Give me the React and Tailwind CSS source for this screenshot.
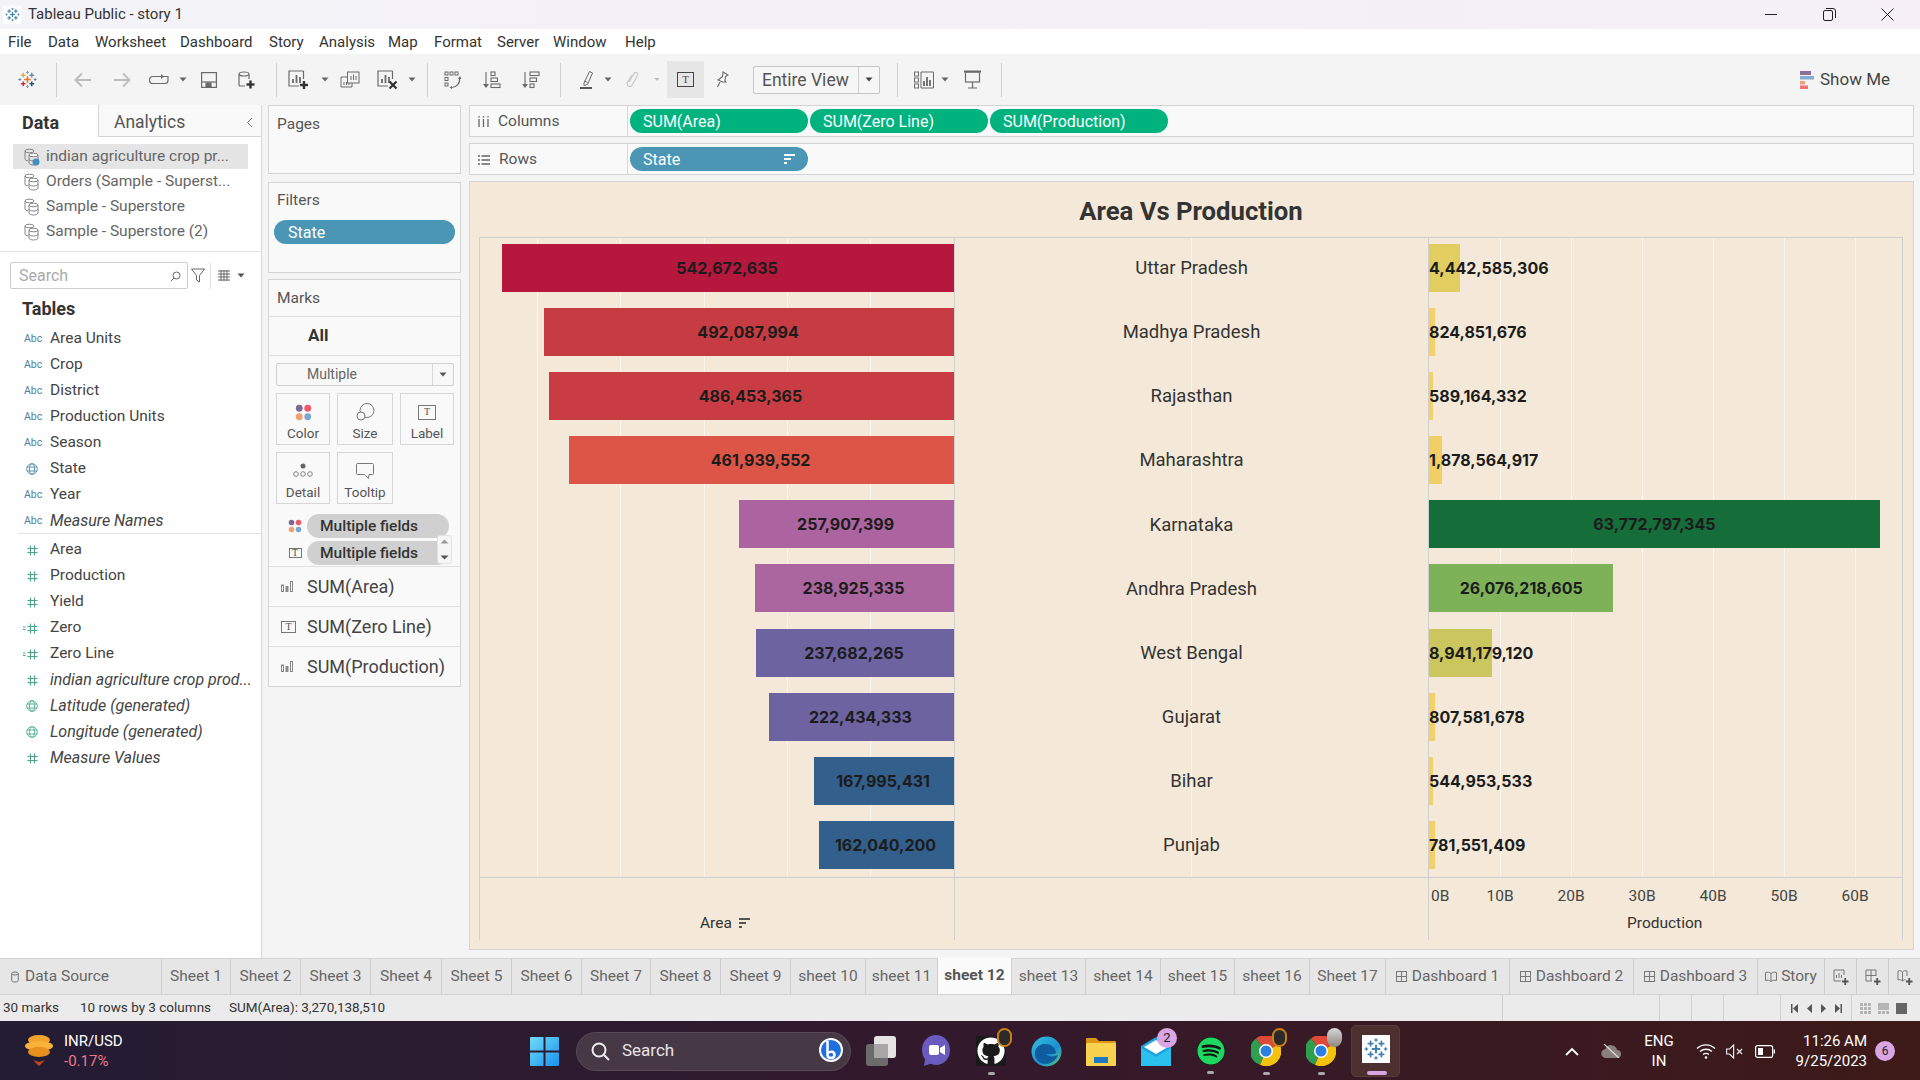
import React from 'react';
import { FaGithub, FaSpotify } from 'react-icons/fa';

const G = '#6a6a6a';

const areaRows = [
  ['Uttar Pradesh', 542672635, '#b5173d', 4442585306, '#e1cd60'],
  ['Madhya Pradesh', 492087994, '#c73b42', 824851676, '#f3d168'],
  ['Rajasthan', 486453365, '#c93c43', 589164332, '#f3d168'],
  ['Maharashtra', 461939552, '#dd5546', 1878564917, '#f1cf64'],
  ['Karnataka', 257907399, '#ab649f', 63772797345, '#156d3a'],
  ['Andhra Pradesh', 238925335, '#ab659f', 26076218605, '#7db259'],
  ['West Bengal', 237682265, '#6d63a0', 8941179120, '#cbc75e'],
  ['Gujarat', 222434333, '#6d63a0', 807581678, '#f3d168'],
  ['Bihar', 167995431, '#325f8c', 544953533, '#f3d168'],
  ['Punjab', 162040200, '#325f8c', 781551409, '#f3d168'],
];

const fields = [
  ['abc', 'Area Units'], ['abc', 'Crop'], ['abc', 'District'], ['abc', 'Production Units'], ['abc', 'Season'],
  ['globe', 'State'], ['abc', 'Year'], ['abc', 'Measure Names', true],
];
const measures = [
  ['hash', 'Area'], ['hash', 'Production'], ['hash', 'Yield'], ['calc', 'Zero'], ['calc', 'Zero Line'],
  ['hash', 'indian agriculture crop prod...', true], ['globeg', 'Latitude (generated)', true],
  ['globeg', 'Longitude (generated)', true], ['hash', 'Measure Values', true],
];

const iconPad = { abc: 'pl-[24px]', hash: 'pl-[27px]', calc: 'pl-[23px]', globe: 'pl-[26px]', globeg: 'pl-[26px]' };

const tabs = [
  ['Sheet 1', 'w-[69px]'], ['Sheet 2', 'w-[70px]'], ['Sheet 3', 'w-[70px]'], ['Sheet 4', 'w-[71px]'],
  ['Sheet 5', 'w-[70px]'], ['Sheet 6', 'w-[70px]'], ['Sheet 7', 'w-[69px]'], ['Sheet 8', 'w-[70px]'],
  ['Sheet 9', 'w-[70px]'], ['sheet 10', 'w-[75px]'], ['sheet 11', 'w-[72px]'], ['sheet 12', 'w-[74px]'],
  ['sheet 13', 'w-[74px]'], ['sheet 14', 'w-[75px]'], ['sheet 15', 'w-[74px]'], ['sheet 16', 'w-[75px]'],
  ['Sheet 17', 'w-[76px]'],
];

const menus = [
  ['File', 'w-[40px]'], ['Data', 'w-[47px]'], ['Worksheet', 'w-[85px]'], ['Dashboard', 'w-[89px]'],
  ['Story', 'w-[50px]'], ['Analysis', 'w-[69px]'], ['Map', 'w-[46px]'], ['Format', 'w-[63px]'],
  ['Server', 'w-[56px]'], ['Window', 'w-[72px]'], ['Help', 'w-[40px]'],
];

const TableauLogo = ({ size = 20, mono }) => {
  const c = (col) => (mono ? '#3f7fb0' : col);
  const cross = (x, y, r, col, w = 1.4) => (
    <g stroke={c(col)} strokeWidth={w}>
      <line x1={x - r} y1={y} x2={x + r} y2={y} />
      <line x1={x} y1={y - r} x2={x} y2={y + r} />
    </g>
  );
  return (
    <svg width={size} height={size} viewBox="0 0 20 20">
      {cross(10, 10, 3.5, '#e8762c', 1.6)}
      {cross(5.5, 5.5, 2.5, '#e8a33d')}
      {cross(14.5, 5.5, 2.5, '#5b879b')}
      {cross(5.5, 14.5, 2.5, '#c72035')}
      {cross(14.5, 14.5, 2.5, '#1f447a')}
      {cross(10, 2.5, 1.5, '#7099a6', 1)}
      {cross(10, 17.5, 1.5, '#7099a6', 1)}
      {cross(2, 10, 1.5, '#59879b', 1)}
      {cross(18, 10, 1.5, '#59879b', 1)}
    </svg>
  );
};

const Drop = ({ color = '#666' }) => (
  <svg width="8" height="5" viewBox="0 0 8 5"><path d="M0.5 0.5h7L4 4.5z" fill={color} /></svg>
);

const Sep = ({ className }) => <div className={`w-px h-[34px] bg-[#cfcfcf] shrink-0 ${className || ''}`} />;

const Cell = ({ className, children }) => (
  <div className={`flex items-center justify-center shrink-0 ${className}`}>{children}</div>
);

const Plus = ({ x, y }) => (
  <g stroke="#333" strokeWidth="2.4"><line x1={x - 4} y1={y} x2={x + 4} y2={y} /><line x1={x} y1={y - 4} x2={x} y2={y + 4} /></g>
);

const SheetIcon = ({ badge }) => (
  <svg width="22" height="20" viewBox="0 0 22 20" fill="none">
    <path d="M15.5 1H1v15h10" stroke={G} strokeWidth="1.2" />
    <line x1="15.5" y1="1" x2="15.5" y2="9" stroke={G} strokeWidth="1.2" />
    <path d="M5 13V9M8.500 13V5M12 13V7" stroke={G} strokeWidth="1.8" />
    {badge === 'plus' && <Plus x={16} y={15} />}
    {badge === 'x' && (
      <g stroke="#333" strokeWidth="2.2"><line x1="12.500" y1="11.500" x2="19.500" y2="18.500" /><line x1="19.500" y1="11.500" x2="12.500" y2="18.500" /></g>
    )}
  </svg>
);

const Toolbar = () => (
  <div className="h-[51px] bg-[#f4f4f4] flex items-center pl-[8px] pr-[30px] shrink-0">
    <Cell className="w-[38px]"><TableauLogo size={19} /></Cell>
    <Sep className="ml-[10px]" />
    <Cell className="w-[42px] ml-[5px]">
      <svg width="18" height="16" viewBox="0 0 18 16" fill="none" stroke="#bdbdbd" strokeWidth="2"><path d="M17 8H2M8 1.500L1.500 8 8 14.500" /></svg>
    </Cell>
    <Cell className="w-[36px]">
      <svg width="18" height="16" viewBox="0 0 18 16" fill="none" stroke="#bdbdbd" strokeWidth="2"><path d="M1 8h15M10 1.500L16.500 8 10 14.500" /></svg>
    </Cell>
    <Cell className="w-[38px]">
      <svg width="20" height="14" viewBox="0 0 20 14" fill="none" stroke={G} strokeWidth="1.2"><path d="M12 3.500H4a3.300 3.300 0 0 0 0 7h12a3 3 0 0 0 3-3V3.500H14" /><path d="M12 1l3 2.500L12 6z" fill={G} stroke="none" /></svg>
    </Cell>
    <Cell className="w-[10px]"><Drop /></Cell>
    <Cell className="w-[42px]">
      <svg width="16" height="16" viewBox="0 0 16 16" fill="none" stroke={G} strokeWidth="1.2"><rect x="0.600" y="0.600" width="14.800" height="14.800" /><line x1="1" y1="10" x2="15" y2="10" /><rect x="5" y="11" width="5" height="4" fill={G} /></svg>
    </Cell>
    <Cell className="w-[34px]">
      <svg width="18" height="18" viewBox="0 0 18 18" fill="none" stroke={G} strokeWidth="1.2"><path d="M1 3.500V14a1 1 0 0 0 1 1h5M11 3.500V8" /><ellipse cx="6" cy="3" rx="5" ry="2" /><Plus x={12.500} y={13.500} /></svg>
    </Cell>
    <Sep className="ml-[12px]" />
    <Cell className="w-[44px]"><SheetIcon badge="plus" /></Cell>
    <Cell className="w-[8px]"><Drop /></Cell>
    <Cell className="w-[42px]">
      <svg width="20" height="18" viewBox="0 0 20 18" fill="none" stroke={G} strokeWidth="1"><rect x="7.500" y="1" width="11.500" height="11" fill="#f4f4f4" /><path d="M11 9V5M13.500 9V3.500M16 9V5" /><path d="M7 6H1v10h11v-4" /><path d="M4 14v-3M6.500 14v-3M9 14v-2" /></svg>
    </Cell>
    <Cell className="w-[34px]"><SheetIcon badge="x" /></Cell>
    <Cell className="w-[14px]"><Drop /></Cell>
    <Sep className="ml-[8px]" />
    <Cell className="w-[50px]">
      <svg width="18" height="18" viewBox="0 0 18 18" fill="none" stroke={G} strokeWidth="1"><rect x="1" y="1" width="3" height="3" /><rect x="6" y="1" width="3" height="3" /><rect x="11" y="1" width="3" height="3" /><rect x="1" y="6.500" width="3" height="3" /><rect x="1" y="12" width="3" height="3" /><path d="M15.500 7a8 8 0 0 1-8 9.500" strokeWidth="1.200" /><path d="M14 8l2-3 1.500 3zM8 15l-2.500 1.500L8 18z" fill={G} stroke="none" /></svg>
    </Cell>
    <Cell className="w-[28px]">
      <svg width="18" height="18" viewBox="0 0 18 18" fill="none" stroke={G} strokeWidth="1.1"><path d="M3 1v14" /><path d="M0 13l3 4 3-4z" fill={G} stroke="none" /><rect x="8" y="1" width="4" height="3.500" /><rect x="8" y="7" width="6.500" height="3.500" /><rect x="8" y="13" width="9" height="3.500" /></svg>
    </Cell>
    <Cell className="w-[50px]">
      <svg width="18" height="18" viewBox="0 0 18 18" fill="none" stroke={G} strokeWidth="1.1"><path d="M3 1v14" /><path d="M0 13l3 4 3-4z" fill={G} stroke="none" /><rect x="8" y="1" width="9" height="3.500" /><rect x="8" y="7" width="6.500" height="3.500" /><rect x="8" y="13" width="4" height="3.500" /></svg>
    </Cell>
    <Sep className="ml-[4px]" />
    <Cell className="w-[34px] ml-[9px]">
      <svg width="14" height="19" viewBox="0 0 14 19" fill="none" stroke={G} strokeWidth="1"><path d="M4 13L9.500 1.500l3 1.500-5 11.500-3.500 1z" /><path d="M4.500 11l3 1.500" /><rect x="0" y="17" width="12" height="2" fill="#555" stroke="none" /></svg>
    </Cell>
    <Cell className="w-[8px]"><Drop /></Cell>
    <Cell className="w-[42px]">
      <svg width="14" height="18" viewBox="0 0 14 18" fill="none" stroke="#c9c9c9" strokeWidth="1.2"><path d="M3 11l5-8.500a2 2 0 0 1 3.500 2L5.500 15a3 3 0 0 1-4.500-3L6 4" /></svg>
    </Cell>
    <Cell className="w-[6px]"><Drop color="#bbb" /></Cell>
    <Cell className="w-[37px] h-[37px] bg-[#e6e6e6] ml-[7px]">
      <div className="w-[17px] h-[15px] border border-[#444] flex items-center justify-center text-[11px] leading-none text-[#444] font-['Liberation_Serif',serif]">T</div>
    </Cell>
    <Cell className="w-[36px]">
      <svg width="13" height="17" viewBox="0 0 13 17" fill="none" stroke={G} strokeWidth="1.1"><path d="M7 1l5 3-2.500 1.500L9 9.500l1 1.500-3.500 0L2 9l1.500-1L6.500 5.500z" /><path d="M4 11l-2.500 5" /></svg>
    </Cell>
    <div className="w-[127px] h-[28px] ml-[13px] border border-[#c6c6c6] rounded-[2px] bg-[#f6f6f6] flex items-center shrink-0">
      <div className="w-[104px] pl-[8px] pt-px text-[17.500px] text-[#555] whitespace-nowrap">Entire View</div>
      <div className="flex-1 h-full border-l border-[#d0d0d0] flex items-center justify-center"><Drop color="#444" /></div>
    </div>
    <Sep className="ml-[17px]" />
    <Cell className="w-[34px] ml-[9px]">
      <svg width="20" height="18" viewBox="0 0 20 18" fill="none" stroke={G} strokeWidth="1"><rect x="0.500" y="1" width="4" height="4" /><rect x="0.500" y="7" width="4" height="4" /><rect x="0.500" y="13" width="4" height="4" /><path d="M7 1h12.500v16H7z" /><path d="M10 15v-5M13 15V6M16 15V9" strokeWidth="1.800" /></svg>
    </Cell>
    <Cell className="w-[8px]"><Drop /></Cell>
    <Cell className="w-[47px]">
      <svg width="17" height="19" viewBox="0 0 17 19" fill="none" stroke={G} strokeWidth="1.2"><path d="M0 1.500h17" strokeWidth="2" /><rect x="1.500" y="2" width="14" height="10" /><path d="M8.500 12v6M4 18h9" /></svg>
    </Cell>
    <Sep className="ml-[5px]" />
    <div className="ml-auto flex items-center gap-[6px] text-[17px] text-[#444]">
      <svg width="14" height="18" viewBox="0 0 14 18"><rect x="0" y="0" width="11" height="4" fill="#8a6f97" /><rect x="0" y="5" width="14" height="3.500" fill="#86a9cf" /><rect x="0" y="10" width="5" height="3.500" fill="#eca17a" /><rect x="0" y="14.500" width="8" height="3.500" fill="#f0737a" /></svg>
      Show Me
    </div>
  </div>
);

const DsIcon = ({ active }) => (
  <svg className="shrink-0" width="16" height="18" viewBox="0 0 16 18" fill="none" stroke="#777" strokeWidth="0.900">
    <ellipse cx="5.500" cy="3" rx="4.500" ry="1.800" />
    <path d="M1 3v8c0 1 1.500 1.800 3 1.800" />
    <ellipse cx="9.500" cy="7" rx="4.500" ry="1.800" fill="#fff" />
    <path d="M5 7v8c0 1 2 2 4.500 2s4.500-1 4.500-2V7M5 11c0 1 2 2 4.500 2s4.500-1 4.500-2" />
    {active && <circle cx="12" cy="14" r="3.500" fill="#3f8fbf" stroke="none" />}
  </svg>
);

const FieldIcon = ({ type }) => {
  if (type === 'abc') return <span className="text-[10.5px] text-[#4f7f9c] leading-none">Abc</span>;
  if (type === 'globe' || type === 'globeg') {
    const col = type === 'globe' ? '#4f8fa8' : '#4cab90';
    return (
      <svg className="shrink-0" width="12" height="12" viewBox="0 0 12 12" fill="none" stroke={col} strokeWidth="0.900">
        <circle cx="6" cy="6" r="5.300" /><ellipse cx="6" cy="6" rx="2.500" ry="5.300" /><path d="M1 4h10M1 8h10" />
      </svg>
    );
  }
  return (
    <svg className="shrink-0" width={type === 'calc' ? 15 : 11} height="11" viewBox={type === 'calc' ? '-4 0 15 11' : '0 0 11 11'} fill="none" stroke="#4aa588" strokeWidth="1">
      <path d="M3.500 0.500v10M7.500 0.500v10M0.500 3.500h10M0.500 7.500h10" />
      {type === 'calc' && <path d="M-4 4h2.500M-4 6.500h2.500" />}
    </svg>
  );
};

const FieldRow = ({ icon, label, italic }) => (
  <div className="h-[26px] flex items-center">
    <div className={`w-[50px] flex items-center shrink-0 ${iconPad[icon]}`}>
      <FieldIcon type={icon} />
    </div>
    <span className={`text-[#444] whitespace-nowrap ${italic ? 'italic text-[16px]' : 'text-[15.500px]'}`}>{label}</span>
  </div>
);

const DataPanel = () => (
  <div className="w-[262px] shrink-0 bg-white border-r border-[#d8d8d8] flex flex-col">
    <div className="h-[32px] flex items-stretch shrink-0">
      <div className="w-[98px] pl-[22px] pt-[2px] flex items-center text-[18px] font-bold text-[#333]">Data</div>
      <div className="flex-1 bg-[#f9f9f9] border-l border-b border-[#d4d4d4] flex items-center pl-[15px] pt-[3px] text-[17.500px] text-[#555]">
        Analytics
        <svg className="ml-auto mr-[8px]" width="7" height="11" viewBox="0 0 7 11" fill="none" stroke="#777" strokeWidth="1"><path d="M6 1L1.500 5.500 6 10" /></svg>
      </div>
    </div>
    <div className="pt-[7px] pl-[13px] h-[115px] border-b border-[#e2e2e2] shrink-0">
      {['indian agriculture crop pr...', 'Orders (Sample - Superst...', 'Sample - Superstore', 'Sample - Superstore (2)'].map((d, i) => (
        <div key={d} className={`w-[235px] h-[25px] flex items-center pl-[11px] gap-[6px] text-[15.500px] text-[#666] whitespace-nowrap ${i === 0 ? 'bg-[#e5e5e5]' : ''}`}>
          <DsIcon active={i === 0} />
          <span>{d}</span>
        </div>
      ))}
    </div>
    <div className="flex items-center pl-[10px] mt-[10px] shrink-0">
      <div className="w-[178px] h-[27px] border border-[#cccccc] rounded-[2px] flex items-center px-[8px] pt-[1px] text-[16px] text-[#aaa]">
        Search
        <svg className="ml-auto -mr-[2px]" width="11" height="11" viewBox="0 0 11 11" fill="none" stroke="#666" strokeWidth="1"><circle cx="6.500" cy="4.500" r="3.500" /><path d="M4 7l-3 3" /></svg>
      </div>
      <svg className="ml-[3px]" width="14" height="15" viewBox="0 0 14 15" fill="none" stroke="#666" strokeWidth="1"><path d="M0.500 1h13L8.500 7.500V14l-3-2V7.500z" /></svg>
      <div className="w-px h-[26px] bg-[#dcdcdc] ml-[5px]" />
      <svg className="ml-[7px]" width="12" height="11" viewBox="0 0 12 11" fill="none" stroke="#666" strokeWidth="1"><path d="M0 1h12M0 4h12M0 7h12M0 10h12M3 0v11M6 0v11M9 0v11" /></svg>
      <div className="ml-[7px]"><Drop color="#555" /></div>
    </div>
    <div className="pl-[22px] mt-[9px] h-[22px] leading-[22px] text-[18px] font-bold text-[#333] shrink-0">Tables</div>
    <div className="mt-[6px]">
      {fields.map(([icon, label, italic]) => <FieldRow key={label} icon={icon} label={label} italic={italic} />)}
    </div>
    <div className="ml-[18px] border-t border-[#e2e2e2] mt-[-1px]" />
    <div className="mt-[3px]">
      {measures.map(([icon, label, italic]) => <FieldRow key={label} icon={icon} label={label} italic={italic} />)}
    </div>
  </div>
);

const Card = ({ className, children }) => (
  <div className={`w-[193px] bg-[#f9f9f9] border border-[#d4d4d4] shrink-0 ${className || ''}`}>{children}</div>
);

const MarkBtn = ({ label, className, children }) => (
  <div className={`h-[52px] border border-[#d6d6d6] flex flex-col items-center pt-[6px] text-[13.500px] text-[#555] ${className}`}>
    <div className="h-[24px] flex items-center">{children}</div>
    <div className="leading-[18px]">{label}</div>
  </div>
);

const FourDots = ({ s = 20 }) => (
  <svg width={s} height={s} viewBox="0 0 20 20">
    <circle cx="5" cy="5" r="4" fill="#7d6a92" /><circle cx="15" cy="5" r="4" fill="#ef5a6b" />
    <circle cx="5" cy="15" r="4" fill="#f0a070" /><circle cx="15" cy="15" r="4" fill="#7ea6d0" />
  </svg>
);

const TBox = ({ w = 16 }) => (
  <div style={{ width: w, height: w - 3 }} className="border border-[#777] flex items-center justify-center text-[10px] leading-none text-[#555] font-['Liberation_Serif',serif]">T</div>
);

const BarsGlyph = () => (
  <svg width="12" height="11" viewBox="0 0 12 11" fill="none" stroke="#888" strokeWidth="1"><rect x="0.500" y="4" width="2" height="6.500" /><rect x="5" y="5.500" width="2" height="5" fill="#888" /><rect x="9.500" y="0.500" width="2" height="10" /></svg>
);

const ShelfPanel = () => (
  <div className="w-[206px] shrink-0 bg-[#f4f4f4] pl-[6px] flex flex-col">
    <Card className="h-[69px] pl-[8px] pt-[7px] text-[15.500px] text-[#555]">Pages</Card>
    <Card className="h-[91px] mt-[8px] px-[5px]">
      <div className="pl-[3px] pt-[6px] text-[15.500px] text-[#555] leading-[22px]">Filters</div>
      <div className="mt-[9px] h-[24px] rounded-full bg-[#4b96b4] text-white text-[16px] pl-[14px] pt-px flex items-center">State</div>
    </Card>
    <Card className="mt-[6px] h-[408px] flex flex-col">
      <div className="h-[37px] pl-[8px] pt-px flex items-center text-[15.500px] text-[#555] border-b border-[#e0e0e0] shrink-0">Marks</div>
      <div className="h-[39px] pl-[39px] flex items-center text-[17px] font-bold text-[#333] border-b border-[#e0e0e0] shrink-0">All</div>
      <div className="mx-[7px] mt-[7px] w-[178px] h-[23px] border border-[#d0d0d0] rounded-[2px] bg-[#f8f8f8] flex items-center shrink-0">
        <div className="w-[155px] pl-[30px] text-[14px] text-[#666]">Multiple</div>
        <div className="flex-1 h-full border-l border-[#d8d8d8] flex items-center justify-center"><Drop color="#555" /></div>
      </div>
      <div className="mx-[7px] mt-[7px] grid grid-cols-[54px_56px_54px] gap-x-[7px] gap-y-[7px] shrink-0">
        <MarkBtn label="Color"><FourDots s={17} /></MarkBtn>
        <MarkBtn label="Size">
          <svg width="19" height="18" viewBox="0 0 19 18" fill="none" stroke="#777" strokeWidth="1"><circle cx="11" cy="7.500" r="7" /><circle cx="5" cy="13" r="4" fill="#f9f9f9" /></svg>
        </MarkBtn>
        <MarkBtn label="Label"><TBox w={18} /></MarkBtn>
        <MarkBtn label="Detail">
          <svg width="20" height="16" viewBox="0 0 20 16" fill="none" stroke="#777" strokeWidth="0.900"><circle cx="10" cy="3" r="2.500" fill="#666" stroke="none" /><circle cx="3" cy="11" r="2.300" /><circle cx="10" cy="11" r="2.300" /><circle cx="17" cy="11" r="2.300" /></svg>
        </MarkBtn>
        <MarkBtn label="Tooltip">
          <svg width="18" height="16" viewBox="0 0 18 16" fill="none" stroke="#777" strokeWidth="1"><path d="M1.500 0.500h15a1 1 0 0 1 1 1v9a1 1 0 0 1-1 1H13l-.5 4-4-4H1.500a1 1 0 0 1-1-1v-9a1 1 0 0 1 1-1z" /></svg>
        </MarkBtn>
      </div>
      <div className="relative mt-[10px] h-[52px] shrink-0">
        {[0, 1].map((i) => (
          <div key={i} className="h-[24px] mb-[3px] flex items-center pl-[18px]">
            <div className="w-[16px] flex justify-center">{i === 0 ? <FourDots s={14} /> : <TBox w={13} />}</div>
            <div className="ml-[4px] w-[142px] h-[24px] rounded-full bg-[#d0d0d0] pl-[13px] pt-[2px] flex items-center text-[15.500px] font-medium text-[#333] whitespace-nowrap">Multiple fields</div>
          </div>
        ))}
        <div className="absolute left-[168px] top-[21px] w-[15px] h-[29px] flex flex-col rounded-[3px] border border-[#e2e2e2] bg-[#f6f6f6] items-center justify-between py-[3px]">
          <svg width="9" height="5" viewBox="0 0 9 5"><path d="M0.500 4.500h8L4.500 0.500z" fill="#999" /></svg>
          <svg width="9" height="5" viewBox="0 0 9 5"><path d="M0.500 0.500h8L4.500 4.500z" fill="#555" /></svg>
        </div>
      </div>
      {[['bars', 'SUM(Area)'], ['t', 'SUM(Zero Line)'], ['bars', 'SUM(Production)']].map(([ic, label]) => (
        <div key={label} className="h-[40px] border-t border-[#e0e0e0] flex items-center pl-[12px] shrink-0">
          <div className="w-[26px]">{ic === 'bars' ? <BarsGlyph /> : <TBox w={15} />}</div>
          <span className="text-[18px] text-[#444] whitespace-nowrap">{label}</span>
        </div>
      ))}
    </Card>
  </div>
);

const ShelfRow = ({ icon, label, children }) => (
  <div className="h-[32px] bg-[#f9f9f9] border border-[#d4d4d4] flex items-center shrink-0">
    <div className="w-[158px] h-full border-r border-[#d8d8d8] flex items-center pl-[8px] pt-px gap-[9px] text-[15.500px] text-[#555]">
      {icon}{label}
    </div>
    <div className="flex gap-[2px] pl-[2px]">{children}</div>
  </div>
);

const SortGlyph = ({ color, className }) => (
  <svg className={className} width="11" height="11" viewBox="0 0 11 11" fill={color}>
    <rect x="0" y="0" width="11" height="2" /><rect x="0" y="4" width="7" height="2" /><rect x="0" y="8" width="3" height="2" />
  </svg>
);

const Pill = ({ color, label, sort }) => (
  <div className={`w-[178px] h-[24px] rounded-full ${color} text-white text-[16px] pl-[13px] pr-[13px] pt-px flex items-center`}>
    {label}
    {sort && <SortGlyph color="#fff" className="ml-auto" />}
  </div>
);

const fmt = (n) => n.toLocaleString('en-US');

const PX_PER_AREA = 452 / 542672635;
const PX_PER_PROD = 7.07 / 1e9;

const GridLines = ({ xs, from }) =>
  xs.map((x) => (
    <div key={x} className="absolute top-0 bottom-0 w-px bg-[#f9f5ed]" style={from === 'right' ? { right: x } : { left: x }} />
  ));

const Chart = () => (
  <div className="flex-1 min-h-0 bg-[#f4e9d8] border border-[#d4d4d4] pl-[9px] pr-[10px] flex flex-col">
    <div className="h-[55px] flex items-center justify-center text-[25.700px] font-bold text-[#333] shrink-0 pt-[4px]">Area Vs Production</div>
    <div className="h-[640px] flex border-t border-x border-[#cfcfcf] shrink-0">
      <div className="relative w-[475px] border-r border-[#cfcfcf] shrink-0 flex flex-col pt-[6px]">
        <GridLines xs={[83, 166, 249, 333, 416]} from="right" />
        {areaRows.map(([st, a, col]) => (
          <div key={st} className="h-[64.100px] shrink-0 flex justify-end relative">
            <div
              className="h-[48px] flex items-center justify-center pr-[2px] text-[16px] font-bold font-['Inter',sans-serif] text-[#1c1c1c]"
              style={{ width: a * PX_PER_AREA, backgroundColor: col }}
            >
              {fmt(a)}
            </div>
          </div>
        ))}
      </div>
      <div className="relative w-[474px] border-r border-[#cfcfcf] shrink-0 flex flex-col pt-[6px]">
        <GridLines xs={[236]} />
        {areaRows.map(([st]) => (
          <div key={st} className="h-[64.100px] shrink-0 relative">
            <div className="h-[48px] pt-[2px] flex items-center justify-center text-[18.500px] text-[#333]">{st}</div>
          </div>
        ))}
      </div>
      <div className="relative flex-1 flex flex-col pt-[6px]">
        <GridLines xs={[71, 142, 213, 284, 355, 426]} />
        {areaRows.map(([st, , , p, col]) => {
          const w = p * PX_PER_PROD;
          return (
            <div key={st} className="h-[64.100px] shrink-0 relative">
              <div className="relative h-[48px] text-[16px] font-bold font-['Inter',sans-serif] text-[#1c1c1c]" style={{ width: w, backgroundColor: col }}>
                <span className={`absolute top-1/2 -translate-y-1/2 whitespace-nowrap ${w > 150 ? 'left-1/2 -translate-x-1/2' : 'left-0'}`}>{fmt(p)}</span>
              </div>
            </div>
          );
        })}
      </div>
    </div>
    <div className="h-[63px] flex border-x border-t border-[#cfcfcf] shrink-0">
      <div className="relative w-[475px] border-r border-[#cfcfcf] shrink-0 text-[15.500px] text-[#333]">
        <div className="absolute left-[220px] top-[34px] flex items-center gap-[7px]">
          Area <SortGlyph color="#555" />
        </div>
      </div>
      <div className="w-[474px] border-r border-[#cfcfcf] shrink-0" />
      <div className="relative flex-1 text-[#444] text-[15.500px]">
        {['0B', '10B', '20B', '30B', '40B', '50B', '60B'].map((t, i) => (
          <span key={t} className={`absolute top-[7px] ${i === 0 ? '' : '-translate-x-1/2'}`} style={{ left: i === 0 ? 2 : i * 71 }}>{t}</span>
        ))}
        <span className="absolute top-[34px] left-[198px] text-[15.500px] text-[#333]">Production</span>
      </div>
    </div>
  </div>
);

const TabBar = () => (
  <div className="h-[37px] bg-[#e6e6e6] border-y border-[#d2d2d2] flex text-[15.500px] text-[#666] shrink-0">
    <div className="w-[162px] border-r border-[#cfcfcf] flex items-center pl-[11px] gap-[6px] shrink-0">
      <svg width="8" height="12" viewBox="0 0 8 12" fill="none" stroke="#777" strokeWidth="1"><ellipse cx="4" cy="2.500" rx="3.300" ry="1.500" /><path d="M0.700 2.500v7C0.700 10.500 2 11 4 11s3.300-.5 3.300-1.500v-7" /></svg>
      Data Source
    </div>
    {tabs.map(([t, w]) => (
      <div key={t} className={`${w} shrink-0 border-r border-[#cfcfcf] flex items-center justify-center ${t === 'sheet 12' ? 'bg-[#fbfbfb] font-bold text-[#555] -mt-px' : ''}`}>{t}</div>
    ))}
    {['Dashboard 1', 'Dashboard 2', 'Dashboard 3'].map((t) => (
      <div key={t} className="w-[124px] shrink-0 border-r border-[#cfcfcf] flex items-center justify-center gap-[5px]">
        <svg width="11" height="11" viewBox="0 0 11 11" fill="none" stroke="#777" strokeWidth="1"><rect x="0.500" y="0.500" width="10" height="10" /><path d="M5.500 0.500v10M0.500 5.500h10" /></svg>
        {t}
      </div>
    ))}
    <div className="w-[67px] shrink-0 border-r border-[#cfcfcf] flex items-center justify-center gap-[4px]">
      <svg width="12" height="12" viewBox="0 0 12 12" fill="none" stroke="#777" strokeWidth="1"><path d="M6 2.500C4.500 1 2.500 1 0.500 1.500v8c2-.5 4-.5 5.500 1 1.500-1.500 3.500-1.500 5.500-1v-8C9.500 1 7.500 1 6 2.500zM6 2.500v8" /></svg>
      Story
    </div>
    {['sheet', 'dash', 'story'].map((k) => (
      <div key={k} className="w-[32px] shrink-0 border-r border-[#cfcfcf] flex items-center justify-center">
        <svg width="16" height="16" viewBox="0 0 16 16" fill="none" stroke="#777" strokeWidth="1">
          {k === 'sheet' && <path d="M11 1H1v11h7M3.500 9V6M6 9V4M8.500 9V6M11 1v5" />}
          {k === 'dash' && <path d="M1 1h10v6M1 1v11h6M1 6.500h10M6 1v11" />}
          {k === 'story' && <path d="M5.500 3C4 1.500 2.500 1.500 1 2v9c1.500-.5 3-.5 4.500 1 1-1 2-1.300 3-1.300M5.500 3C7 1.500 8.500 1.500 10 2v5M5.500 3v9" />}
          <g stroke="#555" strokeWidth="1.800"><path d="M9 12.500h6.500M12.200 9v7" /></g>
        </svg>
      </div>
    ))}
  </div>
);

const StatusBar = () => (
  <div className="h-[26px] bg-[#ebebeb] flex text-[13.500px] text-[#333] shrink-0">
    <div className="w-[1502px] flex items-center pl-[3px] pb-px shrink-0 whitespace-nowrap">
      <span className="w-[77px]">30 marks</span>
      <span className="w-[149px]">10 rows by 3 columns</span>
      <span>SUM(Area): 3,270,138,510</span>
    </div>
    {['w-[157px]', 'w-[32px]', 'w-[32px]', 'w-[57px]'].map((w, i) => (
      <div key={i} className={`${w} border-l border-[#d0d0d0] shrink-0`} />
    ))}
    <div className="w-[71px] border-l border-[#d0d0d0] shrink-0 flex items-center justify-center gap-[9px]">
      <svg width="7" height="9" viewBox="0 0 7 9" fill="#555"><rect width="1.500" height="9" /><path d="M7 0v9L2 4.500z" /></svg>
      <svg width="5" height="9" viewBox="0 0 5 9" fill="#555"><path d="M5 0v9L0 4.500z" /></svg>
      <svg width="5" height="9" viewBox="0 0 5 9" fill="#555"><path d="M0 0v9l5-4.500z" /></svg>
      <svg width="7" height="9" viewBox="0 0 7 9" fill="#555"><path d="M0 0v9l5-4.500z" /><rect x="5.500" width="1.500" height="9" /></svg>
    </div>
    <div className="flex-1 border-l border-[#d0d0d0] flex items-center pl-[8px] gap-[7px]">
      <svg width="11" height="11" viewBox="0 0 11 11" fill="#b5b5b5"><path d="M0 0h3v3H0zM4 0h3v3H4zM8 0h3v3H8zM0 4h3v3H0zM4 4h3v3H4zM8 4h3v3H8zM0 8h3v3H0zM4 8h3v3H4zM8 8h3v3H8z" /></svg>
      <svg width="11" height="11" viewBox="0 0 11 11" fill="#b5b5b5"><rect width="11" height="7" /><path d="M0 8h3v3H0zM4 8h3v3H4zM8 8h3v3H8z" /></svg>
      <svg width="11" height="11" viewBox="0 0 11 11" fill="#666"><rect width="11" height="11" /></svg>
    </div>
  </div>
);

const Avatar = ({ ring }) => (
  <div className={`absolute -top-[8px] -right-[6px] w-[15px] h-[19px] rounded-full ${ring ? 'bg-[#2a2a2a] border-2 border-[#c87f14]' : 'bg-linear-to-b from-[#d8d8d8] to-[#8f8680]'}`} />
);

const Chrome = ({ ring }) => (
  <div className="relative w-[30px] h-[30px]">
    <svg width="30" height="30" viewBox="0 0 30 30">
      <path d="M15 15L5 2.500A15 15 0 0 1 28.500 8z" fill="#dd4a3a" />
      <path d="M15 15L5 2.500A15 15 0 0 0 9 28.800z" fill="#2f9e4f" />
      <path d="M15 15L28.500 8A15 15 0 0 1 9 28.800z" fill="#f4c20d" />
      <circle cx="15" cy="15" r="7" fill="#fff" /><circle cx="15" cy="15" r="5.500" fill="#2c7fe0" />
    </svg>
    <Avatar ring={ring} />
  </div>
);

const Taskbar = () => (
  <div className="h-[60px] bg-linear-to-r from-[#231c33] via-[#33192c] to-[#3e1a18] flex items-center text-white shrink-0 relative">
    <div className="w-[530px] flex items-center pl-[24px] shrink-0">
      <svg width="30" height="34" viewBox="0 0 30 34">
        <ellipse cx="15" cy="6" rx="11" ry="5" fill="#f2a32c" /><ellipse cx="15" cy="12" rx="14" ry="5" fill="#f7b23a" /><ellipse cx="15" cy="18" rx="11" ry="5" fill="#e8901e" />
        <path d="M9 26l6 6 6-6-6 2z" fill="#c04a1c" />
      </svg>
      <div className="ml-[10px] text-[15px] leading-[20px]">
        <div>INR/USD</div>
        <div className="text-[#e8788a]">-0.17%</div>
      </div>
    </div>
    <svg className="shrink-0" width="29" height="29" viewBox="0 0 29 29">
      <defs><linearGradient id="win" x1="0" y1="0" x2="1" y2="1"><stop offset="0" stopColor="#6fdcf7" /><stop offset="1" stopColor="#1a91ee" /></linearGradient></defs>
      <path d="M0 1a1 1 0 0 1 1-1h12.500v13.500H0zM15.500 0H28a1 1 0 0 1 1 1v12.500H15.500zM0 15.500h13.500V29H1a1 1 0 0 1-1-1zM15.500 15.500H29V28a1 1 0 0 1-1 1H15.500z" fill="url(#win)" />
    </svg>
    <div className="ml-[17px] w-[275px] h-[39px] rounded-full bg-[#473845] border border-[#5a4a56] flex items-center pl-[14px] text-[17px] text-[#e8e4e8] shrink-0">
      <svg width="19" height="19" viewBox="0 0 19 19" fill="none" stroke="#eee" strokeWidth="2"><circle cx="8" cy="8" r="6.500" /><path d="M13 13l5 5" /></svg>
      <span className="ml-[12px]">Search</span>
      <svg className="ml-auto mr-[7px]" width="24" height="30" viewBox="0 0 24 30">
        <circle cx="12" cy="14" r="12" fill="#fff" /><circle cx="12" cy="14" r="10" fill="#1f6fe0" />
        <path d="M8.500 5v14c0 4 7 4 7 0s-4-4-7-2" fill="none" stroke="#fff" strokeWidth="2.500" />
      </svg>
    </div>
    <div className="ml-[15px] relative w-[30px] h-[30px] shrink-0">
      <div className="absolute left-0 bottom-0 w-[22px] h-[22px] bg-[#6d6a6b] rounded-[3px]" />
      <div className="absolute right-0 top-0 w-[22px] h-[22px] bg-[#e6e3e4] rounded-[3px]" />
      <div className="absolute left-[8px] top-[8px] w-[14px] h-[14px] bg-[#a9a6a7]" />
    </div>
    <div className="ml-[25px] w-[30px] h-[32px] shrink-0">
      <svg width="30" height="32" viewBox="0 0 30 32"><path d="M15 0c8 0 14 6.500 14 15s-6 15-14 15c-2 0-4-.5-6-1.200L3 31l1-6.500A15.500 15.500 0 0 1 1 15C1 6.500 7 0 15 0z" fill="#6a5bc0" /><rect x="8" y="10" width="10" height="10" rx="2" fill="#fff" /><path d="M19 13l5-3v10l-5-3z" fill="#fff" /></svg>
    </div>
    <div className="ml-[25px] relative w-[30px] h-[30px] bg-[#1a1a1a] flex items-center justify-center shrink-0">
      <FaGithub size={28} color="#fff" />
      <Avatar ring />
      <div className="absolute -bottom-[9px] left-[12px] w-[7px] h-[3px] rounded-full bg-[#aaa]" />
    </div>
    <div className="ml-[25px] w-[31px] h-[31px] shrink-0">
      <svg width="31" height="31" viewBox="0 0 31 31">
        <defs><linearGradient id="edge" x1="0" y1="0" x2="1" y2="1"><stop offset="0" stopColor="#35c1d8" /><stop offset="0.600" stopColor="#1b8fd4" /><stop offset="1" stopColor="#5fcf6c" /></linearGradient></defs>
        <circle cx="15.500" cy="15.500" r="15" fill="url(#edge)" />
        <path d="M6 24c-5-8 0-16 8-16 6 0 10 3 11 9l-2 1H15c2 3 8 3 12 1-3 9-15 12-21 5z" fill="#0f5c9e" />
      </svg>
    </div>
    <div className="ml-[24px] w-[30px] h-[29px] shrink-0">
      <svg width="30" height="29" viewBox="0 0 30 29"><path d="M0 2a1 1 0 0 1 1-1h9l3 3h16a1 1 0 0 1 1 1v4H0z" fill="#d9980f" /><rect y="6" width="30" height="23" rx="1" fill="#f9d34f" /><rect x="8" y="20" width="14" height="6" fill="#1d79c4" /></svg>
    </div>
    <div className="ml-[25px] relative w-[30px] h-[29px] shrink-0">
      <svg width="30" height="29" viewBox="0 0 30 29"><path d="M0 9L15 0l15 9v20H0z" fill="#1fa3e0" /><path d="M3 10L15 3l12 7-12 7z" fill="#fff" /><path d="M0 29V11l15 9 15-9v18z" fill="#2cc0ef" /></svg>
      <div className="absolute -top-[9px] -right-[6px] w-[20px] h-[20px] rounded-full bg-[#d9a5e3] text-[#222] text-[13px] flex items-center justify-center">2</div>
    </div>
    <div className="ml-[26px] relative w-[28px] h-[28px] shrink-0">
      <div className="w-[28px] h-[28px] rounded-full bg-[#111]" />
      <FaSpotify className="absolute inset-0" size={28} color="#1ed760" />
      <div className="absolute -bottom-[9px] left-[10px] w-[7px] h-[3px] rounded-full bg-[#aaa]" />
    </div>
    <div className="ml-[26px] relative shrink-0">
      <Chrome ring />
      <div className="absolute -bottom-[9px] left-[12px] w-[7px] h-[3px] rounded-full bg-[#aaa]" />
    </div>
    <div className="ml-[25px] relative shrink-0">
      <Chrome />
      <div className="absolute -bottom-[9px] left-[12px] w-[7px] h-[3px] rounded-full bg-[#aaa]" />
    </div>
    <div className="ml-[15px] relative w-[49px] h-[52px] rounded-[5px] bg-[#4c2f2e] border border-[#5a3b3a] flex items-center justify-center shrink-0">
      <div className="w-[28px] h-[28px] bg-white flex items-center justify-center -mt-[5px]"><TableauLogo size={24} mono /></div>
      <div className="absolute bottom-[1px] left-[15px] w-[20px] h-[4px] rounded-full bg-[#d9a5e3]" />
    </div>
    <svg className="ml-[165px] shrink-0" width="14" height="9" viewBox="0 0 14 9" fill="none" stroke="#fff" strokeWidth="1.800"><path d="M1 8l6-6 6 6" /></svg>
    <svg className="ml-[22px] shrink-0" width="21" height="14" viewBox="0 0 21 14"><path d="M5 14a4.500 4.500 0 0 1-.5-9 6 6 0 0 1 11.500 1 4 4 0 0 1 0 8z" fill="#8b7f7d" /><path d="M3 0l15 14" stroke="#ddd" strokeWidth="1.200" /></svg>
    <div className="ml-[20px] w-[34px] text-center text-[15px] leading-[20px] shrink-0">
      <div>ENG</div><div>IN</div>
    </div>
    <svg className="ml-[20px] shrink-0" width="20" height="16" viewBox="0 0 20 16" fill="none" stroke="#fff" strokeWidth="1.400"><path d="M1 5.500a13 13 0 0 1 18 0M4 8.500a9 9 0 0 1 12 0M7 11.500a5 5 0 0 1 6 0" /><circle cx="10" cy="14.500" r="1.300" fill="#fff" stroke="none" /></svg>
    <svg className="ml-[10px] shrink-0" width="18" height="15" viewBox="0 0 18 15" fill="none" stroke="#e8e8e8" strokeWidth="1.200"><path d="M0.600 5v5h3l4 4V1l-4 4z" /><path d="M11 5l5 5M16 5l-5 5" /></svg>
    <svg className="ml-[11px] shrink-0" width="20" height="13" viewBox="0 0 20 13" fill="none" stroke="#fff" strokeWidth="1.200"><rect x="0.600" y="0.600" width="17" height="11.800" rx="2" /><rect x="3" y="3" width="5" height="7" fill="#fff" stroke="none" /><path d="M19.300 4.500v4" strokeWidth="1.500" /></svg>
    <div className="ml-[11px] w-[81px] text-right text-[15px] leading-[20px] whitespace-nowrap shrink-0">
      <div>11:26 AM</div><div>9/25/2023</div>
    </div>
    <div className="ml-[8px] w-[20px] h-[20px] rounded-full bg-[#d9a5e3] text-[#222] text-[12px] flex items-center justify-center shrink-0">6</div>
  </div>
);

export default function App() {
  return (
    <div className="w-[1920px] h-[1080px] flex flex-col overflow-hidden bg-white font-['Roboto',sans-serif]">
      <div className="h-[29px] bg-linear-to-r from-[#f3f3f8] via-[#f3f0f7] to-[#f6eff7] flex items-center shrink-0">
        <div className="ml-[3px] w-[18px] h-[18px] bg-white flex items-center justify-center"><TableauLogo size={15} mono /></div>
        <span className="ml-[7px] text-[15px] text-[#333]">Tableau Public - story 1</span>
        <div className="ml-auto pr-[4px] flex items-center h-full text-[#222]">
          <div className="w-[58px] flex justify-center"><svg width="12" height="2" viewBox="0 0 12 2"><rect width="12" height="1" fill="#222" /></svg></div>
          <div className="w-[58px] flex justify-center"><svg width="13" height="13" viewBox="0 0 13 13" fill="none" stroke="#222" strokeWidth="1"><rect x="0.500" y="2.500" width="9" height="10" rx="1.500" /><path d="M3 0.500h7a2.500 2.500 0 0 1 2.500 2.500v7" /></svg></div>
          <div className="w-[58px] flex justify-center"><svg width="13" height="13" viewBox="0 0 13 13" stroke="#222" strokeWidth="1"><path d="M0.500 0.500l12 12M12.500 0.500l-12 12" /></svg></div>
        </div>
      </div>
      <div className="h-[25px] bg-white flex items-center pl-[8px] pt-px text-[15px] text-[#333] shrink-0">
        {menus.map(([m, w]) => <div key={m} className={`${w} shrink-0`}>{m}</div>)}
      </div>
      <Toolbar />
      <div className="flex h-[853px] shrink-0 bg-[#f4f4f4]">
        <DataPanel />
        <ShelfPanel />
        <div className="flex-1 min-w-0 pr-[6px] pl-px pb-[8px] flex flex-col gap-[6px]">
          <ShelfRow
            label="Columns"
            icon={<svg width="11" height="11" viewBox="0 0 11 11" stroke="#666" strokeWidth="1.300"><path d="M1 3v8M5.500 3v8M10 3v8M1 0v1.500M5.500 0v1.500M10 0v1.500" /></svg>}
          >
            <Pill color="bg-[#00b27e]" label="SUM(Area)" />
            <Pill color="bg-[#00b27e]" label="SUM(Zero Line)" />
            <Pill color="bg-[#00b27e]" label="SUM(Production)" />
          </ShelfRow>
          <ShelfRow
            label="Rows"
            icon={<svg width="12" height="10" viewBox="0 0 12 10" stroke="#666" strokeWidth="1.300"><path d="M0 1h2M3.500 1H12M0 5h2M3.500 5H12M0 9h2M3.500 9H12" /></svg>}
          >
            <Pill color="bg-[#4b96b4]" label="State" sort />
          </ShelfRow>
          <Chart />
        </div>
      </div>
      <TabBar />
      <StatusBar />
      <Taskbar />
    </div>
  );
}
